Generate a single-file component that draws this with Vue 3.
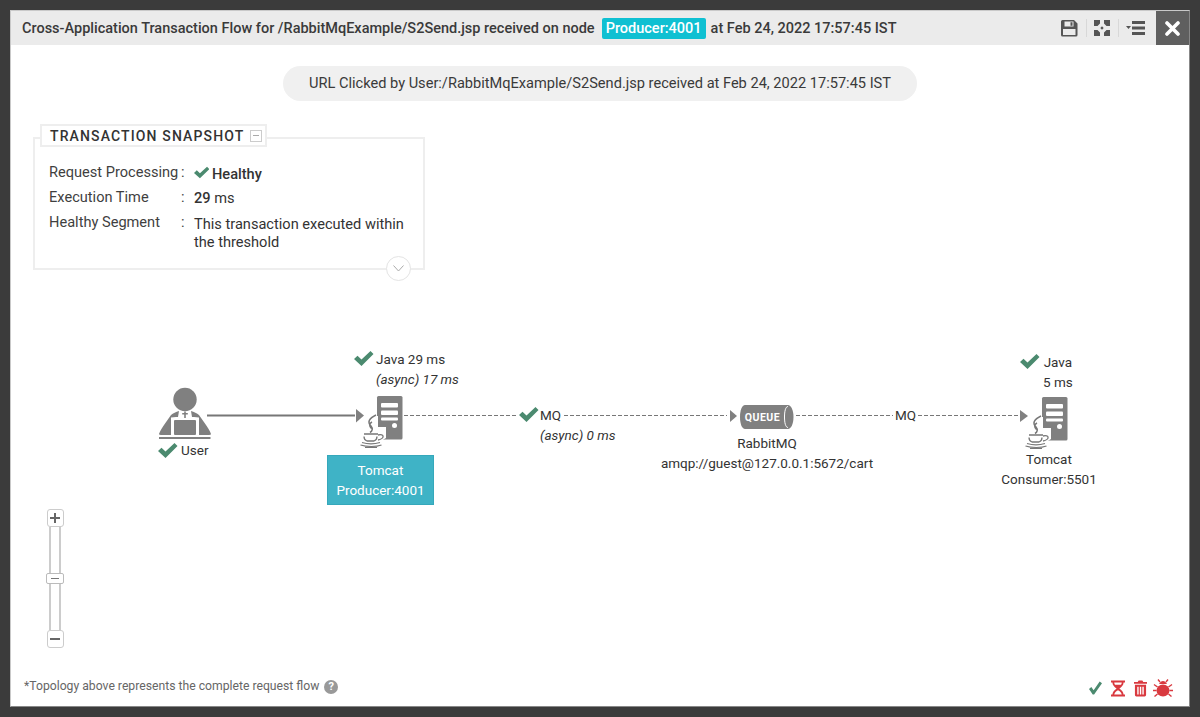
<script setup>
const rows = [
  { label: 'Request Processing', value: 'Healthy', kind: 'health' },
  { label: 'Execution Time', value: '29', unit: ' ms', kind: 'time' },
  { label: 'Healthy Segment', value: 'This transaction executed within the threshold', kind: 'text' }
]
const title = 'Cross-Application Transaction Flow for /RabbitMqExample/S2Send.jsp received on node'
const checks = [
  'M354 359l3.500-3.200 4 3.700 9-8.400 3 3-12 11.800z',
  'M158 451l3.500-3.200 4 3.700 9-8.400 3 3-12 11.800z',
  'M519 415l3.500-3.200 4 3.700 9-8.400 3 3-12 11.800z',
  'M1020 362l3.500-3.200 4 3.700 9-8.400 3 3-12 11.800z'
]
</script>

<template>
  <div class="page">
    <div class="modal">
      <header class="head">
        <span class="title">{{ title }}</span>
        <span class="badge">Producer:4001</span>
        <span class="title">at Feb 24, 2022 17:57:45 IST</span>
        <div class="tools">
          <svg class="tool" width="17" height="18" viewBox="0 0 17 18">
            <path fill="#555" fill-rule="evenodd" d="M1.500 1h11.500l3.500 3.500v11.500a1.500 1.500 0 0 1-1.500 1.500H1.500A1.500 1.500 0 0 1 0 16V2.500A1.500 1.500 0 0 1 1.500 1zM3.500 2.500v5h9v-5zM9.500 3.200h2v3.500h-2zM2 10v6h12.500v-6z"/>
          </svg>
          <i class="sep"></i>
          <svg class="tool" width="16" height="16" viewBox="0 0 16 16">
            <path fill="#555" d="M0 0h6v3.500L3.500 6H0zM16 0v6h-3.500L10 3.500V0zM0 16v-6h3.500L6 12.500V16zM16 16h-6v-3.500l2.500-2.500H16zM8 6.300L9.700 8 8 9.700 6.300 8z"/>
          </svg>
          <i class="sep"></i>
          <svg class="tool" width="19" height="14" viewBox="0 0 19 14">
            <path fill="#555" d="M6 0h13v3H6zM6 5.500h13v3H6zM6 11h13v3H6zM0 5h5L2.500 8z"/>
          </svg>
        </div>
        <button class="close" aria-label="Close">
          <svg width="15" height="15" viewBox="0 0 15 15">
            <path fill="none" stroke="#fff" stroke-width="3.600" stroke-linecap="round" d="M2 2l11 11M13 2L2 13"/>
          </svg>
        </button>
      </header>

      <main class="content">
        <div class="pill">URL Clicked by User:/RabbitMqExample/S2Send.jsp received at Feb 24, 2022 17:57:45 IST</div>

        <section class="snapshot">
          <div class="legend">
            <span>TRANSACTION SNAPSHOT</span>
            <i class="minus"></i>
          </div>
          <dl class="facts">
            <div v-for="r in rows" :key="r.label" class="fact" :class="r.kind">
              <dt>{{ r.label }}</dt>
              <dd class="colon">:</dd>
              <dd class="val">
                <template v-if="r.kind === 'health'">
                  <svg class="tick" width="15" height="13" viewBox="0 0 19 15">
                    <path fill="#4b8a6f" d="M0 8l3.500-3.200 4 3.700 9-8.400 3 3-12 11.800z"/>
                  </svg><b>{{ r.value }}</b>
                </template>
                <template v-else-if="r.kind === 'time'"><b>{{ r.value }}</b>{{ r.unit }}</template>
                <template v-else>{{ r.value }}</template>
              </dd>
            </div>
          </dl>
          <span class="more">
            <svg width="11" height="7" viewBox="0 0 11 7"><path fill="none" stroke="#aaa" d="M.5.500l5 5.500 5-5.500"/></svg>
          </span>
        </section>

        <section class="stage">
          <svg class="wires" width="1178" height="390" viewBox="11 280 1178 390">
            <defs>
              <g id="srv">
                <rect x="377" y="396" width="25.500" height="43.500" rx="1.500" fill="#808080"/>
                <rect x="381" y="403" width="17" height="4.500" rx="1" fill="#fff"/>
                <rect x="381" y="410.500" width="17" height="4.500" rx="1" fill="#fff"/>
                <rect x="381" y="417.500" width="17" height="3" rx="1" fill="#fff"/>
                <circle cx="394.500" cy="425.500" r="2.500" fill="#fff"/>
                <path fill="#fff" d="M370 416h8v11h8v11l-5 3v8h-23v-10l3-3v-8z"/>
                <g fill="none" stroke="#777">
                  <path stroke-width="1.500" d="M376 415c-7 3.500-9 7-5 11 2 2.500 1.500 5-1 6.500M372 422c-3 1.500-3 4-.5 6.500"/>
                  <path stroke-width="1.300" d="M364 434h14M364 436.500c0 2 1.500 4 3 4.500h7c1.500-.5 3-2.500 3-4.500M378 435c6.500-1.500 7 3.500 0 5"/>
                  <path stroke-width="1.100" d="M362 442.500c5 1.500 13 1.500 18 0M360.500 445c6 2 16 2 21 0M365 447.500h12"/>
                </g>
              </g>
            </defs>

            <!-- user -->
            <g fill="#808080">
              <circle cx="185" cy="399.500" r="11.700"/>
              <path d="M159 434c1-3 3-6 5-9l7-10c2-2 5-3 8-4l-1 6h-2l-5 .500v17.500h-9c-2 0-2.500-.500-3-.500zM211 434c-1-3-3-6-5-9l-7-10c-2-2-5-3-8-4l1 6h2l5 .500v17.500h9c2 0 2.500-.500 3-.500z"/>
              <path d="M184.200 411.500h1.600v1.500h2v1.600h-2v3.400h-1.600v-3.400h-2V413h2z"/>
              <rect x="174" y="420" width="22" height="15" rx="1"/>
              <rect x="159" y="437" width="51.500" height="2"/>
            </g>

            <use href="#srv"/>
            <use href="#srv" x="665" y="1"/>

            <!-- links -->
            <path d="M207 415.500h148" stroke="#777" stroke-width="2" fill="none"/>
            <path d="M356 409l8 6.500-8 7z" fill="#808080"/>
            <g stroke="#777" stroke-width="1" stroke-dasharray="4 2" fill="none">
              <path d="M404 415.500h112"/>
              <path d="M564 415.500h163"/>
              <path d="M796 415.500h97"/>
              <path d="M918 415.500h100"/>
            </g>
            <path d="M730 410l7 6-7 6z" fill="#808080"/>
            <path d="M1020 410l8 6-8 6z" fill="#808080"/>

            <!-- queue -->
            <path fill="#808080" d="M745 405h43c3 0 5.500 5 5.500 12s-2.500 12-5.500 12h-43c-3 0-5-5-5-12s2-12 5-12z"/>
            <path fill="none" stroke="#fff" stroke-width="1" d="M788 406.500c-2.500 0-3.500 5-3.500 10.500s1 10.500 3.500 10.500"/>
            <text x="762.500" y="421" text-anchor="middle" class="qtext">QUEUE</text>

            <!-- health ticks -->
            <path v-for="c in checks" :key="c" :d="c" fill="#4b8a6f"/>
          </svg>

          <span class="lbl user">User</span>
          <div class="lbl java1">Java 29 ms<br><em>(async) 17 ms</em></div>
          <div class="node-active">Tomcat<br>Producer:4001</div>
          <span class="lbl mq1">MQ</span>
          <em class="lbl mq1b">(async) 0 ms</em>
          <div class="lbl rabbit">RabbitMQ<br>amqp://guest@127.0.0.1:5672/cart</div>
          <span class="lbl mq2">MQ</span>
          <div class="lbl java2">Java<br>5 ms</div>
          <div class="lbl tomcat2">Tomcat<br>Consumer:5501</div>

          <div class="zoomer">
            <span class="zbtn">
              <svg width="10" height="10" viewBox="0 0 10 10"><path fill="#666" d="M4 0h2v4h4v2H6v4H4V6H0V4h4z"/></svg>
            </span>
            <span class="ztrack"></span>
            <span class="zhandle"><i></i></span>
            <span class="ztrack"></span>
            <span class="zbtn">
              <svg width="10" height="10" viewBox="0 0 10 10"><path fill="#666" d="M0 4h10v2H0z"/></svg>
            </span>
          </div>
        </section>

        <footer class="foot">
          <span class="note">*Topology above represents the complete request flow</span>
          <span class="help">?</span>
          <div class="status">
            <svg width="13" height="14" viewBox="0 0 14 14"><path fill="#4b8a6f" d="M0 8l2.500-2 2.500 3.500L11.500 0 14 2 5.500 14h-1.500z"/></svg>
            <svg width="14" height="17" viewBox="0 0 15 17">
              <path fill="#d9393f" fill-rule="evenodd" d="M0 0h15v2h-1.500c0 3-2.500 5-4.500 6.500 2 1.500 4.500 3.500 4.500 6.500H15v2H0v-2h1.500C1.500 12 4 10 6 8.500 4 7 1.500 5 1.500 2H0zM3.500 2c0 1 .3 1.800.8 2.500h6.400c.5-.7.800-1.500.8-2.500zM7.500 10.500C5.500 11.500 3.800 13 3.500 15h8c-.3-2-2-3.500-4-4.500z"/>
            </svg>
            <svg width="13" height="17" viewBox="0 0 14 17">
              <path fill="#d9393f" fill-rule="evenodd" d="M5 0h4l1 1.500h4v2H0v-2h4zM1 4.500h12V15.500a1.500 1.500 0 0 1-1.500 1.500h-9A1.500 1.500 0 0 1 1 15.500zM3.500 6.500v8.500h1.500V6.500zM6.300 6.500v8.500h1.500V6.500zM9 6.500v8.500h1.500V6.500z"/>
            </svg>
            <svg class="bug" width="20" height="18" viewBox="0 0 20 18">
              <g fill="#d9393f">
                <ellipse cx="10" cy="11.500" rx="6.500" ry="6"/>
                <path d="M6 5c1-2 2.500-3 4-3s3 1 4 3z"/>
              </g>
              <g fill="none" stroke="#d9393f" stroke-width="1.400">
                <path d="M7 3L5 .5M13 3l2-2.500M4.500 8L1 5.500M15.500 8L19 5.500M3.500 11.500H0M16.500 11.500H20M4.500 15L1.500 17.500M15.500 15l3 2.500"/>
              </g>
            </svg>
          </div>
        </footer>
      </main>
    </div>
  </div>
</template>

<style>
html, body { margin: 0; overflow: hidden; }
</style>

<style scoped>
.page {
  box-sizing: border-box;
  width: 1200px;
  height: 717px;
  padding: 10px;
  background: #3b3b3b;
  font-family: Roboto, "Liberation Sans", sans-serif;
  color: #333;
}
.modal {
  box-sizing: border-box;
  height: 697px;
  display: flex;
  flex-direction: column;
  background: #fff;
  border: 1px solid #c9c9c9;
  border-right-color: #888;
  border-bottom-color: #888;
}
.head {
  flex: none;
  height: 34px;
  display: flex;
  align-items: center;
  padding-left: 11px;
  background: #ebebeb;
}
.title {
  font-size: 14.500px;
  font-weight: 500;
  color: #3a3a3a;
  white-space: nowrap;
}
.badge {
  margin: 0 5px 0 7px;
  padding: 0 4px;
  height: 21px;
  line-height: 21px;
  border-radius: 2px;
  background: #0fc0d2;
  color: #fff;
  font-size: 14.500px;
  font-weight: 500;
}
.tools {
  margin-left: auto;
  display: flex;
  align-items: center;
}
.tool { display: block; }
.sep {
  width: 1px;
  height: 18px;
  margin: 0 7px 0 8px;
  background: #d8d8d8;
}
.close {
  margin-left: 11px;
  width: 33px;
  height: 34px;
  padding: 0;
  border: 0;
  background: #5f5f5f;
  display: flex;
  align-items: center;
  justify-content: center;
}
.content {
  flex: 1;
  min-height: 0;
  display: flex;
  flex-direction: column;
}
.pill {
  align-self: center;
  margin-top: 21px;
  width: 634px;
  height: 35px;
  line-height: 35px;
  text-align: center;
  border-radius: 18px;
  background: #f0f0f0;
  font-size: 14.600px;
  color: #3a3a3a;
  white-space: nowrap;
}
.snapshot {
  position: relative;
  box-sizing: border-box;
  flex: none;
  width: 392px;
  height: 133px;
  margin: 36px 0 0 22px;
  border: 2px solid #eee;
  padding: 24px 14px 0 14px;
}
.legend {
  position: absolute;
  left: 5px;
  top: -15px;
  box-sizing: border-box;
  height: 23px;
  padding: 0 3px 0 8px;
  display: flex;
  align-items: center;
  gap: 6px;
  background: #fff;
  border: 2px solid #eee;
  font-size: 14px;
  font-weight: 500;
  letter-spacing: 1.130px;
  color: #333;
  white-space: nowrap;
}
.minus {
  position: relative;
  box-sizing: border-box;
  width: 12px;
  height: 12px;
  border: 1px solid #ccc;
}
.minus::after {
  content: "";
  position: absolute;
  left: 2px;
  top: 4px;
  width: 6px;
  height: 1px;
  background: #aaa;
}
.facts { margin: 0; }
.fact {
  display: grid;
  grid-template-columns: 132px 13px 1fr;
  font-size: 14.600px;
  line-height: 18px;
  color: #3f3f3f;
}
.fact dt, .fact dd { margin: 0; }
.health { height: 25px; }
.time { height: 25px; }
.val { color: #333; }
.health .val { padding-top: 2px; display: flex; align-items: center; height: 18px; }
.time .val { padding-top: 1px; }
.text .val { padding-top: 2px; width: 216px; }
.val b { font-weight: 500; }
.tick { margin: -3px 3px 0 0; }
.more {
  position: absolute;
  right: 12px;
  bottom: -13px;
  box-sizing: border-box;
  width: 25px;
  height: 25px;
  display: flex;
  align-items: center;
  justify-content: center;
  border: 1px solid #e4e4e4;
  border-radius: 50%;
  background: #fff;
}
.stage {
  position: relative;
  flex: 1;
  min-height: 0;
  margin-top: 10px;
}
.wires {
  position: absolute;
  left: 0;
  top: 0;
}
.qtext {
  font-family: Roboto, sans-serif;
  font-size: 10.500px;
  font-weight: 700;
  letter-spacing: 0.500px;
  fill: #fff;
}
.lbl {
  position: absolute;
  font-size: 13.500px;
  line-height: 20px;
  color: #333;
  white-space: nowrap;
}
.lbl em, em.lbl { font-style: italic; }
.user { left: 170px; top: 160px; }
.java1 { left: 365px; top: 69px; }
.mq1 { left: 529px; top: 125px; }
.mq1b { left: 529px; top: 145px; }
.rabbit { left: 630px; top: 153px; width: 252px; text-align: center; }
.mq2 { left: 884px; top: 125px; }
.java2 { left: 1032px; top: 72px; text-align: center; }
.tomcat2 { left: 976px; top: 169px; width: 124px; text-align: center; }
.node-active {
  position: absolute;
  left: 316px;
  top: 175px;
  box-sizing: border-box;
  width: 107px;
  height: 50px;
  padding-top: 4px;
  background: #3fb3c6;
  border: 1px solid #35a8bb;
  color: #fff;
  font-size: 13.500px;
  line-height: 20px;
  text-align: center;
}
.zoomer {
  position: absolute;
  left: 35px;
  top: 229px;
  width: 18px;
  display: flex;
  flex-direction: column;
  align-items: center;
}
.zbtn {
  box-sizing: border-box;
  width: 17px;
  height: 18px;
  display: flex;
  align-items: center;
  justify-content: center;
  border: 1px solid #ccc;
  border-radius: 3px;
  background: #fff;
}
.ztrack {
  box-sizing: border-box;
  width: 12px;
  height: 46px;
  border-left: 2px solid #ccc;
  border-right: 2px solid #ccc;
}
.zhandle {
  box-sizing: border-box;
  width: 18px;
  height: 11px;
  display: flex;
  align-items: center;
  justify-content: center;
  border: 1px solid #bbb;
  border-radius: 2px;
  background: #fff;
}
.zhandle i {
  width: 8px;
  height: 1.500px;
  background: #777;
}
.foot {
  flex: none;
  height: 36px;
  padding: 0 16px 0 13px;
  display: flex;
  align-items: center;
}
.note {
  margin-bottom: 4px;
  font-size: 12.200px;
  color: #666;
}
.help {
  margin: 0 0 2px 5px;
  width: 14px;
  height: 14px;
  border-radius: 50%;
  background: #999;
  color: #fff;
  font-size: 11px;
  font-weight: 700;
  line-height: 14px;
  text-align: center;
}
.status {
  margin-left: auto;
  display: flex;
  align-items: center;
  gap: 9px;
}
.bug { margin-left: -3px; }
</style>
